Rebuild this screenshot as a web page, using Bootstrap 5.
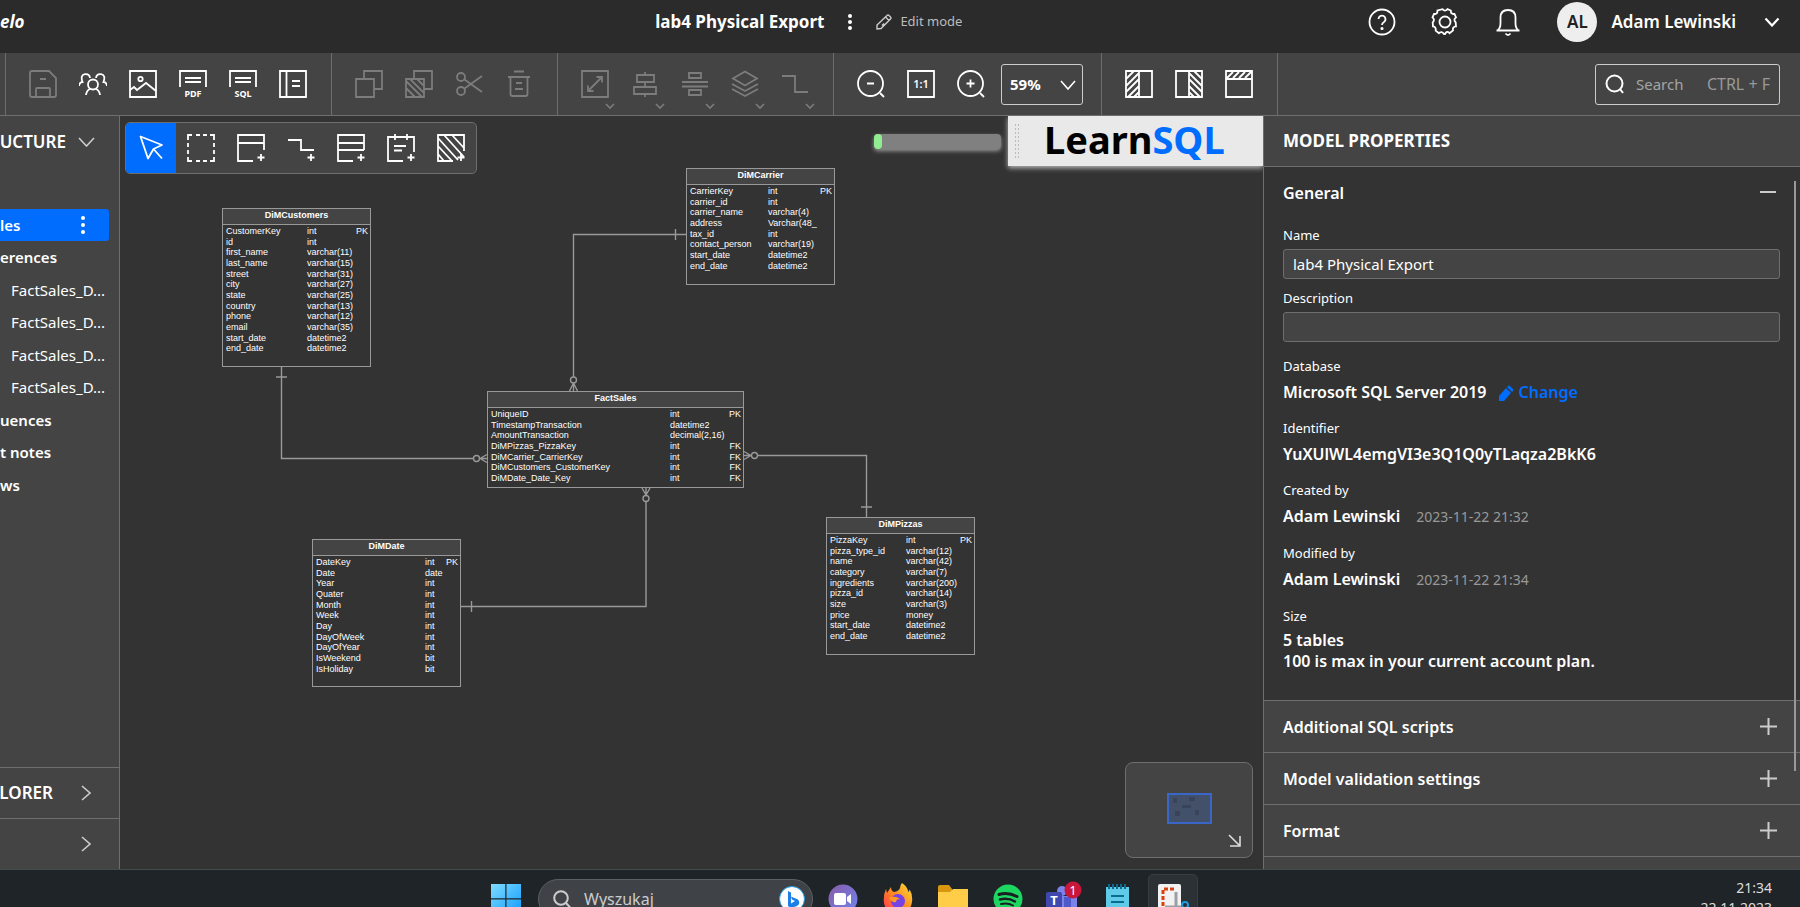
<!DOCTYPE html>
<html lang="en" data-bs-theme="dark">
<head>
<meta charset="utf-8">
<meta name="viewport" content="width=device-width, initial-scale=1">
<title>lab4 Physical Export</title>
<link href="https://cdn.jsdelivr.net/npm/bootstrap@5.3.0/dist/css/bootstrap.min.css" rel="stylesheet">
<style>
:root{--panel:#444;--canvas:#333;--line:#6e6e6e;--accent:#006dff}
body{font-family:"Noto Sans","Open Sans",sans-serif;font-size:15px;color:#fff;background:var(--canvas);overflow:hidden}
button{color:inherit}
.ic{width:28px;height:28px;fill:none;stroke:currentColor;stroke-width:1.8;flex:none;display:block}
.plain{background:none;border:0;padding:0;display:flex;align-items:center;justify-content:center}

.topbar{background:#2b2b2b;height:53px;padding-bottom:10px;flex:none}
.brand-col{width:36.4%}
.brand-word{font-size:17px;font-weight:700;font-style:italic}
.doc-title{font-size:17px;font-weight:700;line-height:24px}
.mode-label{font-size:13px;color:#bdbdbd}
.account{gap:35px}
.avatar{width:40px;height:40px;border-radius:50%;background:#eee;color:#222;font-size:17px;font-weight:600}
.user-name{font-size:17px;font-weight:600;margin:0 28px 0 14px}

.toolstrip{background:var(--panel);height:63px;border-bottom:1px solid var(--line);flex:none}
.tool-group{display:flex;align-items:center;padding:0 13px 0 12px;border-right:1px solid var(--line)}
.tool-group.edge{padding:0 0 0 5px}
.tool{width:50px;height:50px;position:relative}
.tool:disabled{color:#7c7c7c}
.tool .more{position:absolute;right:5px;bottom:-1px;width:10px;height:7px}
.zoom-box{width:82px;height:41px;border:1px solid #ccc;border-radius:3px;background:none;color:#fff;font-size:15px;font-weight:700;padding:0 8px;appearance:none}
.zoom-wrap{margin:0 5px}
.zoom-wrap svg{position:absolute;right:7px;top:16px;width:16px;height:10px;pointer-events:none}
.finder{width:185px;height:41px;border:1px solid #ccc;border-radius:3px;padding:0 9px}
.finder input{width:60px;background:none;border:0;padding:0;color:#fff;font-size:15px;outline:0}
.finder input::placeholder{color:#a5a5a5;opacity:1}
.finder span{font-size:16px;color:#999}

.sidebar{width:120px;background:var(--panel);border-right:1px solid var(--line);overflow:hidden;flex:none}
.side-head{height:51px;font-size:17px;font-weight:600;justify-content:flex-end;white-space:nowrap}
.side-head svg{stroke:#ccc;flex:none}
.side-foot{border-top:1px solid var(--line)}
.tree{margin:42px 10px 0 0;padding:0;list-style:none}
.tree li{height:32px;display:flex;align-items:center;font-weight:600;white-space:nowrap}
.tree li:nth-child(even){height:33px}
.tree .picked{background:var(--accent);border-radius:0 3px 3px 0;justify-content:space-between;padding-right:24px}
.tree .leaf{font-weight:400;padding-left:11px}

.board{background:var(--canvas);overflow:hidden}
.toolbox{left:5px;top:6px;border:1px solid var(--line);border-radius:5px;background:var(--panel);overflow:hidden}
.toolbox .active{background:var(--accent)}
.quota{right:262px;top:18px;width:127px;height:15px;border-radius:4px;background:#808080;box-shadow:0 2px 4px #999;overflow:visible}
.quota .progress-bar{background:#90ee90;border-radius:4px}
.ad{right:0;top:0;width:255px;height:50px;background:#e9e9e9;box-shadow:0 2px 5px #bbb;color:#000;font-size:38px;font-weight:700;line-height:46px;text-decoration:none;padding-left:36px}
.ad span{color:var(--accent)}
.ad::before{content:"";position:absolute;left:6px;top:7px;width:6px;height:36px;background:radial-gradient(#bbb 1px,transparent 1px) 0 0/3px 4px}
.entity{position:absolute;border:1px solid #999;background:var(--canvas);font:9px/11px "Liberation Sans",Arial,sans-serif;color:#fff;width:149px}
.entity h2{font:700 9px/13px "Liberation Sans",Arial,sans-serif;height:16px;margin:0;text-align:center;background:var(--panel);border-bottom:1px solid #999}
.entity table{table-layout:fixed;width:100%;border-collapse:collapse;margin-top:1px}
.entity td{padding:0;white-space:nowrap;height:11px;line-height:11px}
.entity tr:nth-child(3n+2) td{height:10px;line-height:10px}
.entity td:first-child{padding-left:3px}
.entity td:last-child{width:20px;text-align:right;padding-right:2px}
#customers{left:102px;top:92px;height:159px}#customers td:first-child{width:84px}
#carrier{left:566px;top:52px;height:117px}#carrier td:first-child{width:81px}
#fact{left:367px;top:275px;height:97px;width:257px}#fact td:first-child{width:182px}
#dates{left:192px;top:423px;height:148px}#dates td:first-child{width:112px}
#pizzas{left:706px;top:401px;height:138px}#pizzas td:first-child{width:79px}
.wires{left:0;top:0;width:1143px;height:753px;fill:none;stroke:#999;stroke-width:1.4}
.minimap{right:10px;bottom:11px;width:128px;height:96px;border:1px solid var(--line);border-radius:8px;background:var(--panel)}
.minimap .view{left:41px;top:30px}
.minimap .shrink{right:11px;bottom:10px}

.props{width:537px;background:var(--panel);border-left:1px solid var(--line);flex:none;overflow:hidden}
.props-head{height:51px;font-size:17px;font-weight:700;border-bottom:1px solid var(--line);padding-left:19px;margin:0}
.general{background:var(--canvas);padding:14px 20px 28px 19px}
.sect{font-size:16px;font-weight:600;line-height:24px;margin:0}
.general label,.general dt{display:block;font-size:13px;font-weight:400;line-height:20px;margin:0}
.general .first{margin-top:20px}
.general .next{margin-top:9px}
.prop-input{display:block;width:100%;height:30px;margin-top:4px;border:1px solid var(--line);border-radius:3px;background:var(--panel);color:#fff;font-size:15px;padding:0 9px}
.general dl{margin:0}
.general dt{margin-top:14px}
.general dd{font-size:16px;font-weight:600;line-height:24px;margin:4px 0 0}
.general dd.tight{line-height:21px}
.general dd time{font-size:14px;font-weight:400;color:#999;margin-left:16px}
.general dd a{color:var(--accent);text-decoration:none;margin-left:11px}
.fold{width:100%;height:52px;border-top:1px solid var(--line)!important;padding:0 23px 0 19px;font-size:16px;font-weight:600;justify-content:space-between}
.fold svg,.general header svg{width:17px;height:17px;stroke:#ccc;stroke-width:2;fill:none}
.thumb{right:4px;top:65px;width:2px;height:590px;background:#999}

.taskbar{height:38px;background:#1f2429;border-top:1px solid #444a4c;overflow:hidden;flex:none}
.task-inner{height:58px}
.weather{width:487px;font-size:15px;color:#ccc;padding-top:26px}
.find-pill{width:275px;height:40px;border-radius:20px;background:#3f4347;border:1px solid #5c6064;padding:0 7px 0 14px;margin:0 2px 0 17px}
.find-pill input{flex:1;min-width:0;background:none;border:0;color:#ccc;font-size:16px;padding:0 0 0 12px}
.find-pill input::placeholder{color:#ccc;opacity:1}
.app{width:55px;height:50px}
.app.on{width:50px;background:#2c3135;border:1px solid #383d41;border-radius:5px;margin-left:3px}
.clock{font-size:14px;line-height:20px;color:#ddd;text-align:right;padding:0 28px 2px 0}
</style>
</head>
<body>
<div class="d-flex flex-column vh-100">

<header class="topbar d-flex align-items-center">
  <div class="brand-col"><span class="brand-word">elo</span></div>
  <h1 class="doc-title m-0">lab4 Physical Export</h1>
  <button class="plain ms-3 px-2" aria-label="Model menu"><svg width="4" height="18" fill="#fff"><circle cx="2" cy="3" r="2"/><circle cx="2" cy="9" r="2"/><circle cx="2" cy="15" r="2"/></svg></button>
  <svg class="ms-3" width="16" height="16" viewBox="0 0 16 16" fill="none" stroke="#ccc" stroke-width="1.4"><path d="M1 15v-4L11 1.500q1-1 2 0l1.500 1.500q1 1 0 2L5 14.500zM9.500 3l3.500 3.500M8 9.500l-2 2"/></svg>
  <span class="mode-label ms-2">Edit mode</span>
  <div class="account ms-auto d-flex align-items-center pe-3">
    <button class="plain" aria-label="Help"><svg class="ic" viewBox="0 0 28 28"><circle cx="14" cy="14" r="12.500"/><path d="M10.500 11a3.500 3.500 0 1 1 5.500 3q-2 1.200-2 3"/><circle cx="14" cy="20.500" r=".7" fill="#fff"/></svg></button>
    <button class="plain" aria-label="Settings"><svg class="ic" viewBox="0 0 28 28"><circle cx="14" cy="14" r="5.500"/><path d="M11.500 1.200q2.500 3 5 0l3.300 1.300q-.2 3.800 3.700 3.500l1.500 3.400q-3 2.300-.3 5l.3 4q-3.800.4-3 4l-3.500 2.800q-2.800-2.800-4.500.8h-1q-2.200-3.400-5-.8l-3.300-2.600q.6-3.800-2.700-4.200l-.3-4q2.600-2.700-.2-5l1.500-3.400q3.600.3 3.500-3.500z"/></svg></button>
    <button class="plain" aria-label="Notifications"><svg class="ic" viewBox="0 0 28 28"><path d="M2.500 22.500h23M4 22q2.500-2 2.500-7V9.500q0-7.500 7.500-7.500t7.500 7.500V15q0 5 2.500 7M11.500 25.500q2.500 3 5 0"/></svg></button>
    <div class="d-flex align-items-center">
      <span class="avatar d-flex align-items-center justify-content-center">AL</span>
      <span class="user-name">Adam Lewinski</span>
      <button class="plain me-1" aria-label="Account menu"><svg width="16" height="10" fill="none" stroke="#fff" stroke-width="2.200"><path d="M1.500 1.500 8 8.500l6.500-7"/></svg></button>
    </div>
  </div>
</header>

<div class="toolstrip d-flex" role="toolbar" aria-label="Main">
  <div class="tool-group edge"></div>
  <div class="tool-group">
    <button class="plain tool" disabled aria-label="Save"><svg class="ic" viewBox="0 0 28 28"><path d="M1 3q0-2 2-2h17l7 7v17q0 2-2 2H3q-2 0-2-2zM7 27v-8q0-1 1-1h12q1 0 1 1v8M11 9h6"/></svg></button>
    <button class="plain tool" aria-label="Share"><svg class="ic" viewBox="0 0 28 28"><circle cx="14" cy="14.500" r="5"/><path d="M7 25q.5-4.500 4-6M21 25q-.5-4.500-4-6M0 16q.5-4 3.500-4Q1 5 6 4.200q4.500-.5 5 3.800M28 16q-.5-4-3.500-4Q27 5 22 4.200q-4.500-.5-5 3.800"/></svg></button>
    <button class="plain tool" aria-label="Export image"><svg class="ic" viewBox="0 0 28 28"><path d="M1 1h26v26H1z"/><circle cx="11.500" cy="9" r="2.200"/><path d="m1 20 4-3 3 3 9-7 10 8"/></svg></button>
    <button class="plain tool" aria-label="Export PDF"><svg class="ic" viewBox="0 0 28 28"><path d="M1 17V1h26v16M6 8h16M6 12h16"/><text x="14" y="26.500" text-anchor="middle" font-size="9" font-weight="700" fill="#fff" stroke="none">PDF</text></svg></button>
    <button class="plain tool" aria-label="Export SQL"><svg class="ic" viewBox="0 0 28 28"><path d="M1 17V1h26v16M6 8h16M6 12h16"/><text x="14" y="26.500" text-anchor="middle" font-size="9" font-weight="700" fill="#fff" stroke="none">SQL</text></svg></button>
    <button class="plain tool" aria-label="Documentation"><svg class="ic" viewBox="0 0 28 28"><path d="M1 1h26v26H1zM7.500 1v26M13 11h8M13 16h8"/></svg></button>
  </div>
  <div class="tool-group">
    <button class="plain tool" disabled aria-label="Copy"><svg class="ic" viewBox="0 0 28 28"><path d="M1 9h18v18H1zM9 9V1h18v18h-8"/></svg></button>
    <button class="plain tool" disabled aria-label="Paste"><svg class="ic" viewBox="0 0 28 28"><path d="M1 9h18v18H1zM9 9V1h18v18h-8M1 11l16 16M5 9l14 14M12 9l7 7M1 18l9 9"/></svg></button>
    <button class="plain tool" disabled aria-label="Cut"><svg class="ic" viewBox="0 0 28 28"><circle cx="6" cy="7" r="4"/><circle cx="6" cy="21" r="4"/><path d="M9.500 9.500 27 22M9.500 18.500 27 6"/></svg></button>
    <button class="plain tool" disabled aria-label="Delete"><svg class="ic" viewBox="0 0 28 28"><path d="M9 1.500h10M3 7h22M5.500 7v17q0 2 2 2h13q2 0 2-2V7M11 13h6M10 19h8"/></svg></button>
  </div>
  <div class="tool-group">
    <button class="plain tool" disabled aria-label="Resize"><svg class="ic" viewBox="0 0 28 28"><path d="M1 1h26v26H1zM7 21 21 7M15.500 7H21v5.500M7 15.500V21h5.500"/></svg><svg class="more" fill="none" stroke="currentColor" stroke-width="1.600"><path d="m1 1 4 4 4-4"/></svg></button>
    <button class="plain tool" disabled aria-label="Align"><svg class="ic" viewBox="0 0 28 28"><path d="M6 5h17v7H6zM3 17h22v7H3zM14 2v3M14 12v5M14 24v3"/></svg><svg class="more" fill="none" stroke="currentColor" stroke-width="1.600"><path d="m1 1 4 4 4-4"/></svg></button>
    <button class="plain tool" disabled aria-label="Distribute"><svg class="ic" viewBox="0 0 28 28"><path d="M8 3h12v5H8zM8 20h12v5H8zM1 12h26M1 16.500h26"/></svg><svg class="more" fill="none" stroke="currentColor" stroke-width="1.600"><path d="m1 1 4 4 4-4"/></svg></button>
    <button class="plain tool" disabled aria-label="Layers"><svg class="ic" viewBox="0 0 28 28"><path d="m14 1.500 12 7-12 7-12-7zM1 14l13 7 13-7M1 19l13 7 13-7"/></svg><svg class="more" fill="none" stroke="currentColor" stroke-width="1.600"><path d="m1 1 4 4 4-4"/></svg></button>
    <button class="plain tool" disabled aria-label="Line style"><svg class="ic" viewBox="0 0 28 28"><path d="M1 6h13v16h13"/></svg><svg class="more" fill="none" stroke="currentColor" stroke-width="1.600"><path d="m1 1 4 4 4-4"/></svg></button>
  </div>
  <div class="tool-group">
    <button class="plain tool" aria-label="Zoom out"><svg class="ic" viewBox="0 0 28 28"><circle cx="13.500" cy="13.500" r="12.500"/><path d="m23 23 4 4M10 13.500h7"/></svg></button>
    <button class="plain tool" aria-label="Actual size"><svg class="ic" viewBox="0 0 28 28"><path d="M1 1h26v26H1z"/><text x="14" y="18" text-anchor="middle" font-size="11" font-weight="600" fill="#fff" stroke="none">1:1</text></svg></button>
    <button class="plain tool" aria-label="Zoom in"><svg class="ic" viewBox="0 0 28 28"><circle cx="13.500" cy="13.500" r="12.500"/><path d="m23 23 4 4M9.500 13.500h8M13.500 9.500v8"/></svg></button>
    <div class="zoom-wrap position-relative"><select class="zoom-box" aria-label="Zoom"><option>59%</option><option>100%</option></select><svg fill="none" stroke="#fff" stroke-width="1.600"><path d="m1 1 7 8 7-8"/></svg></div>
  </div>
  <div class="tool-group">
    <button class="plain tool" aria-label="Toggle left panel"><svg class="ic" viewBox="0 0 28 28"><path d="M1 1h26v26H1zM14 1v26M1 9l8-8M1 16 14 3M1 22l13-13M3 27l11-11M9 27l5-5"/></svg></button>
    <button class="plain tool" aria-label="Toggle right panel"><svg class="ic" viewBox="0 0 28 28"><path d="M1 1h26v26H1zM14 1v26M19 1l8 8M14 3l13 13M14 9l13 13M14 16l11 11M14 22l5 5"/></svg></button>
    <button class="plain tool" aria-label="Toggle toolbar"><svg class="ic" viewBox="0 0 28 28"><path d="M1 1h26v26H1zM1 9h26M2 8l6-6M8 8l6-6M14 8l6-6M20 8l6-6"/></svg></button>
  </div>
  <div class="ms-auto me-3 pe-1 d-flex align-items-center">
    <label class="finder d-flex align-items-center"><svg width="19" height="20" fill="none" stroke="#fff" stroke-width="2"><circle cx="9.500" cy="9.500" r="8"/><path d="m15 15 3 4"/></svg><input class="ms-2 ps-1" type="text" placeholder="Search" aria-label="Search"><span class="ms-auto">CTRL + F</span></label>
  </div>
</div>

<main class="d-flex flex-grow-1" style="min-height:0">
  <nav class="sidebar d-flex flex-column">
    <div class="side-head d-flex align-items-center pe-4"><span class="me-2 pe-1">UCTURE</span><svg width="17" height="10" fill="none" stroke-width="1.600"><path d="m1 1 7.500 8L16 1"/></svg></div>
    <ul class="tree">
      <li class="picked">les<svg width="4" height="18" fill="#fff"><circle cx="2" cy="2" r="2"/><circle cx="2" cy="9" r="2"/><circle cx="2" cy="16" r="2"/></svg></li>
      <li>erences</li>
      <li class="leaf">FactSales_D...</li>
      <li class="leaf">FactSales_D...</li>
      <li class="leaf">FactSales_D...</li>
      <li class="leaf">FactSales_D...</li>
      <li>uences</li>
      <li>t notes</li>
      <li>ws</li>
    </ul>
    <div class="side-head side-foot d-flex align-items-center mt-auto pe-4"><span class="me-4">LORER</span><svg class="ms-1 me-1" width="10" height="16" fill="none" stroke-width="1.600"><path d="m1 1 8 7-8 7"/></svg></div>
    <div class="side-head side-foot d-flex align-items-center pe-4"><svg class="me-1" width="10" height="16" fill="none" stroke-width="1.600"><path d="m1 1 8 7-8 7"/></svg></div>
  </nav>

  <section class="board position-relative flex-grow-1">
    <svg class="wires position-absolute">
      <path d="M161.500 251v91.500H367M156 261h11M360 342.500l7-4M360 342.500l7 4"/>
      <path d="M566 118.500H453.500V275M555.500 113v11M453.500 267l-4 8M453.500 267l4 8"/>
      <path d="M624 339.500h122.500V401M741 391h11M631 339.500l-7-4M631 339.500l-7 4"/>
      <path d="M341 490.500h185V372M351.500 485v11M526 379l-4-7M526 379l4-7"/>
      <g fill="#333"><circle cx="356.500" cy="342.500" r="3"/><circle cx="453.500" cy="264" r="3"/><circle cx="634.500" cy="339.500" r="3"/><circle cx="526" cy="382.500" r="3"/></g>
    </svg>

    <article class="entity" id="customers"><h2>DiMCustomers</h2><table>
      <tr><td>CustomerKey</td><td>int</td><td>PK</td></tr><tr><td>id</td><td>int</td><td></td></tr><tr><td>first_name</td><td>varchar(11)</td><td></td></tr><tr><td>last_name</td><td>varchar(15)</td><td></td></tr><tr><td>street</td><td>varchar(31)</td><td></td></tr><tr><td>city</td><td>varchar(27)</td><td></td></tr><tr><td>state</td><td>varchar(25)</td><td></td></tr><tr><td>country</td><td>varchar(13)</td><td></td></tr><tr><td>phone</td><td>varchar(12)</td><td></td></tr><tr><td>email</td><td>varchar(35)</td><td></td></tr><tr><td>start_date</td><td>datetime2</td><td></td></tr><tr><td>end_date</td><td>datetime2</td><td></td></tr>
    </table></article>

    <article class="entity" id="carrier"><h2>DiMCarrier</h2><table>
      <tr><td>CarrierKey</td><td>int</td><td>PK</td></tr><tr><td>carrier_id</td><td>int</td><td></td></tr><tr><td>carrier_name</td><td>varchar(4)</td><td></td></tr><tr><td>address</td><td>Varchar(48_</td><td></td></tr><tr><td>tax_id</td><td>int</td><td></td></tr><tr><td>contact_person</td><td>varchar(19)</td><td></td></tr><tr><td>start_date</td><td>datetime2</td><td></td></tr><tr><td>end_date</td><td>datetime2</td><td></td></tr>
    </table></article>

    <article class="entity" id="fact"><h2>FactSales</h2><table>
      <tr><td>UniqueID</td><td>int</td><td>PK</td></tr><tr><td>TimestampTransaction</td><td>datetime2</td><td></td></tr><tr><td>AmountTransaction</td><td>decimal(2,16)</td><td></td></tr><tr><td>DiMPizzas_PizzaKey</td><td>int</td><td>FK</td></tr><tr><td>DiMCarrier_CarrierKey</td><td>int</td><td>FK</td></tr><tr><td>DiMCustomers_CustomerKey</td><td>int</td><td>FK</td></tr><tr><td>DiMDate_Date_Key</td><td>int</td><td>FK</td></tr>
    </table></article>

    <article class="entity" id="dates"><h2>DiMDate</h2><table>
      <tr><td>DateKey</td><td>int</td><td>PK</td></tr><tr><td>Date</td><td>date</td><td></td></tr><tr><td>Year</td><td>int</td><td></td></tr><tr><td>Quater</td><td>int</td><td></td></tr><tr><td>Month</td><td>int</td><td></td></tr><tr><td>Week</td><td>int</td><td></td></tr><tr><td>Day</td><td>int</td><td></td></tr><tr><td>DayOfWeek</td><td>int</td><td></td></tr><tr><td>DayOfYear</td><td>int</td><td></td></tr><tr><td>IsWeekend</td><td>bit</td><td></td></tr><tr><td>IsHoliday</td><td>bit</td><td></td></tr>
    </table></article>

    <article class="entity" id="pizzas"><h2>DiMPizzas</h2><table>
      <tr><td>PizzaKey</td><td>int</td><td>PK</td></tr><tr><td>pizza_type_id</td><td>varchar(12)</td><td></td></tr><tr><td>name</td><td>varchar(42)</td><td></td></tr><tr><td>category</td><td>varchar(7)</td><td></td></tr><tr><td>ingredients</td><td>varchar(200)</td><td></td></tr><tr><td>pizza_id</td><td>varchar(14)</td><td></td></tr><tr><td>size</td><td>varchar(3)</td><td></td></tr><tr><td>price</td><td>money</td><td></td></tr><tr><td>start_date</td><td>datetime2</td><td></td></tr><tr><td>end_date</td><td>datetime2</td><td></td></tr>
    </table></article>

    <div class="toolbox position-absolute d-flex" role="toolbar" aria-label="Drawing">
      <button class="plain tool active" aria-label="Select"><svg class="ic" viewBox="0 0 28 28"><path stroke-linejoin="round" d="M3.500 2.500 25 11l-8.500 4L11 24.500zM16.500 15l8.500 9.500"/></svg></button>
      <button class="plain tool" aria-label="Marquee"><svg class="ic" viewBox="0 0 28 28"><path d="M1 6V1h4M9 1h4M16 1h4M23 1h4v5M27 9v4M27 16v4M27 23v4h-4M20 27h-4M13 27H9M5 27H1v-4M1 20v-4M1 13V9"/></svg></button>
      <button class="plain tool" aria-label="Add table"><svg class="ic" viewBox="0 0 28 28"><path d="M16 27H1V1h26v15M1 9h26M24 20v7M20.500 23.500h7"/></svg></button>
      <button class="plain tool" aria-label="Add reference"><svg class="ic" viewBox="0 0 28 28"><path d="M1 6h13v10h13M24 20v7M20.500 23.500h7"/></svg></button>
      <button class="plain tool" aria-label="Add view"><svg class="ic" viewBox="0 0 28 28"><path d="M16 27H1V1h26v15M1 9h26M1 16h26M24 20v7M20.500 23.500h7"/></svg></button>
      <button class="plain tool" aria-label="Add note"><svg class="ic" viewBox="0 0 28 28"><path d="M16 27H1V3h26v15M8 0v6M20 0v6M7 12h12M7 16.500h8M24 20v7M20.500 23.500h7"/></svg></button>
      <button class="plain tool" aria-label="Add area"><svg class="ic" viewBox="0 0 28 28"><path d="M16 27H1V1h26v16M1 4l20 22M1 12l14 15M7 1l20 22M15 1l12 13M1 20l6 7M24 20v7M20.500 23.500h7"/></svg></button>
    </div>
    <div class="progress quota position-absolute" role="progressbar" aria-label="Usage" aria-valuenow="6"><div class="progress-bar" style="width:6%"></div></div>
    <a class="ad position-absolute" href="#">Learn<span>SQL</span></a>
    <div class="minimap position-absolute">
      <svg class="view position-absolute" width="45" height="31"><path d="M1 1h43v29H1z" fill="#435069" stroke="#3a66c8" stroke-width="2"/><path fill="#39435a" d="M6 5h4v5H6zM22 4h6v4h-6zM15 12h9v3h-9zM8 18h5v5H8zM28 17h4v5h-4z"/></svg>
      <svg class="shrink position-absolute" width="13" height="13" fill="none" stroke="#ddd" stroke-width="1.600"><path d="m1 1 10 10M12 2v10H2"/></svg>
    </div>
  </section>

  <aside class="props position-relative">
    <h2 class="props-head d-flex align-items-center">MODEL PROPERTIES</h2>
    <div class="general">
      <header class="d-flex align-items-center justify-content-between pe-1"><h3 class="sect">General</h3><svg><path d="M1 7h16"/></svg></header>
      <label class="first" for="mname">Name</label>
      <input class="prop-input" id="mname" type="text" value="lab4 Physical Export">
      <label class="next" for="mdesc">Description</label>
      <input class="prop-input" id="mdesc" type="text">
      <dl>
        <dt>Database</dt><dd>Microsoft SQL Server 2019<a href="#"><svg class="me-1" width="17" height="17" viewBox="0 0 17 17" fill="#006dff"><path d="M1 16v-5l7-8 5 5-7 8zM9 2l1-1q1-1 2 0l3 3q1 1 0 2l-1 1z"/></svg>Change</a></dd>
        <dt>Identifier</dt><dd>YuXUlWL4emgVI3e3Q1Q0yTLaqza2BkK6</dd>
        <dt>Created by</dt><dd>Adam Lewinski<time>2023-11-22 21:32</time></dd>
        <dt>Modified by</dt><dd>Adam Lewinski<time>2023-11-22 21:34</time></dd>
        <dt>Size</dt><dd class="tight">5 tables<br>100 is max in your current account plan.</dd>
      </dl>
    </div>
    <button class="plain fold">Additional SQL scripts<svg><path d="M0 8.500h17M8.500 0v17"/></svg></button>
    <button class="plain fold">Model validation settings<svg><path d="M0 8.500h17M8.500 0v17"/></svg></button>
    <button class="plain fold">Format<svg><path d="M0 8.500h17M8.500 0v17"/></svg></button>
    <div class="fold"></div>
    <div class="thumb position-absolute"></div>
  </aside>
</main>

<footer class="taskbar">
  <div class="task-inner d-flex align-items-center">
    <div class="weather">rnie</div>
    <button class="plain ms-1" aria-label="Start"><svg width="30" height="30"><defs><linearGradient id="w" x2="1" y2="1"><stop stop-color="#7fdcff"/><stop offset="1" stop-color="#0f9bff"/></linearGradient></defs><path fill="url(#w)" d="M0 0h14.300v14.300H0zM15.500 0H30v14.300H15.500zM0 15.500h14.300V30H0zM15.500 15.500H30V30H15.500z"/></svg></button>
    <div class="find-pill d-flex align-items-center">
      <svg width="19" height="19" fill="none" stroke="#ccc" stroke-width="2"><circle cx="8" cy="8" r="6.800"/><path d="m13 13 5 5.500"/></svg>
      <input type="text" placeholder="Wyszukaj" aria-label="Wyszukaj">
      <svg width="26" height="26"><circle cx="13" cy="13" r="12.500" fill="#fff" stroke="#1e9be8"/><path d="M9 5l3 1.500v11l4-2.500-3-1.500-1-3 7 3q3 4-1 6.500L12 22l-3-2z" fill="#1b7fe6"/></svg>
    </div>
    <button class="plain app" aria-label="Meetings"><svg width="30" height="30"><defs><linearGradient id="m" x2="1" y2="1"><stop stop-color="#8a5ba8"/><stop offset="1" stop-color="#6c86f0"/></linearGradient></defs><circle cx="15" cy="15" r="14.500" fill="url(#m)"/><rect x="6" y="9" width="12" height="12" rx="2" fill="#fff"/><path d="M19 13l4-3v10l-4-3z" fill="#fff"/></svg></button>
    <button class="plain app" aria-label="Firefox"><svg width="30" height="32"><defs><linearGradient id="f" x1="1" x2="0" y2="1"><stop stop-color="#ffe33b"/><stop offset=".5" stop-color="#ff8a1f"/><stop offset="1" stop-color="#ff2a5b"/></linearGradient></defs><path fill="url(#f)" d="M19 0q6 4 6 9 2-1 1.500-3Q30 12 29 19q-2 12-14 12T1 20Q0 12 3 6l1 4 4-6q0 4 3 5 5-1 6-4 0-3 2-5z"/><circle cx="15" cy="18" r="7" fill="#7542e5"/><path d="M6 15q6-3 11 1-4 0-4 3-4 1-7-4z" fill="#ff9a24"/></svg></button>
    <button class="plain app" aria-label="Explorer"><svg width="30" height="28"><path fill="#d9960f" d="M0 2q0-2 2-2h9l3 4v6H0z"/><path fill="#ffcd47" d="M0 7h12l3-3h15v22H0z"/><path fill="#1681d5" d="M6 28v-2q0-3 3-3h12q3 0 3 3v2z"/></svg></button>
    <button class="plain app" aria-label="Spotify"><svg width="30" height="30" fill="none" stroke="#191f22" stroke-linecap="round"><circle cx="15" cy="15" r="14.500" fill="#1ed760" stroke="none"/><path stroke-width="3" d="M6 10.500q9-2.500 18 2"/><path stroke-width="2.500" d="M7 15.500q8-2 15 2"/><path stroke-width="2" d="M8 20q7-1.500 12 1.500"/></svg></button>
    <button class="plain app" aria-label="Teams"><svg width="38" height="36"><circle cx="18" cy="10" r="5" fill="#7b83eb"/><path fill="#7b83eb" d="M14 15h19v12q-1 8-9 8t-10-7z"/><path fill="#5059c9" d="M20 16h7v16h-7z"/><rect x="2" y="11" width="16" height="16" rx="2" fill="#4048ad"/><text x="10" y="24" font-size="13" font-weight="700" fill="#fff" text-anchor="middle">T</text><circle cx="29" cy="9" r="8.500" fill="#c8173a"/><text x="29" y="14" font-size="13" fill="#fff" text-anchor="middle">1</text></svg></button>
    <button class="plain app" aria-label="Notepad"><svg width="24" height="32"><path fill="#5fcbe8" d="M0 4h23v28H0z"/><path stroke="#0b6c90" stroke-width="2" d="M3 1v5M7 1v5M11 1v5M15 1v5M19 1v5M5 13h13M5 19h13M5 25h13"/></svg></button>
    <button class="plain app on" aria-label="Snipping tool"><svg width="32" height="34"><rect x="1" y="2" width="23" height="28" rx="2" fill="#f2f2f2"/><path d="M6 24V7h13" fill="none" stroke="#d8410e" stroke-width="3" stroke-dasharray="4 2"/><path d="M19 10v22M8 25h16" stroke="#9aa0a6" stroke-width="3"/><circle cx="28" cy="23" r="3" fill="none" stroke="#1f9be0" stroke-width="2"/></svg></button>
    <div class="clock ms-auto">21:34<br>22.11.2023</div>
  </div>
</footer>
</div>
<script src="https://cdn.jsdelivr.net/npm/bootstrap@5.3.0/dist/js/bootstrap.bundle.min.js"></script>
</body>
</html>
